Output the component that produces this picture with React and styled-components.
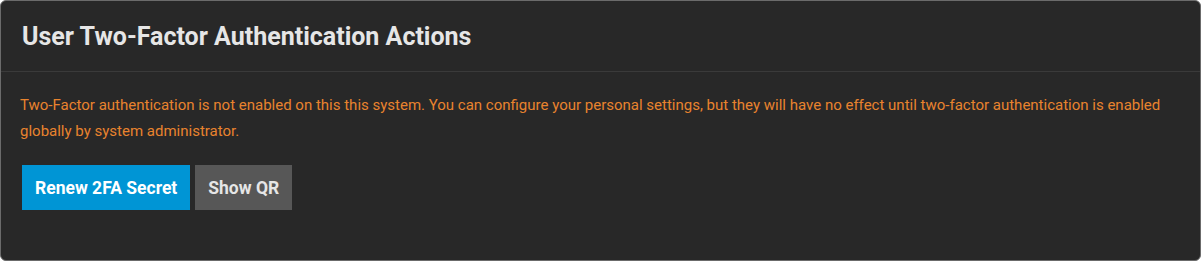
import React from "react";
import styled, { createGlobalStyle } from "styled-components";

const GlobalStyle = createGlobalStyle`
	html, body {
		margin: 0;
		padding: 0;
		background: #ffffff;
	}
	body {
		font-family: Roboto, "Liberation Sans", sans-serif;
	}
`;

const Card = styled.section`
	box-sizing: border-box;
	width: 1201px;
	height: 261px;
	background: #282828;
	border: 1px solid #6b6b6b;
	border-radius: 6px;
	display: flex;
	flex-direction: column;
	overflow: hidden;
`;

const CardHeader = styled.header`
	height: 70px;
	padding: 0 21px;
	display: flex;
	align-items: center;
	border-bottom: 1px solid #3a3a3a;

	h1 {
		margin: 0;
		font-size: 25px;
		font-weight: 700;
		color: #e6e6e6;
	}
`;

const CardBody = styled.div`
	padding: 20px 19px;
	display: flex;
	flex-direction: column;
	gap: 21px;
`;

const Warning = styled.p`
	margin: 0;
	font-size: 15px;
	line-height: 26px;
	color: #e8832e;
`;

const Actions = styled.div`
	display: flex;
	gap: 5px;
	padding-left: 2px;
`;

const Button = styled.button`
	height: 45px;
	padding: 0 13px;
	border: none;
	border-radius: 0;
	font-family: Roboto, "Liberation Sans", sans-serif;
	font-size: 17.5px;
	font-weight: 700;
	color: ${(p) => (p.$primary ? "#ffffff" : "#e6e6e6")};
	background: ${(p) => (p.$primary ? "#0095d5" : "#575757")};
	cursor: pointer;
`;

export default function App() {
	return (
		<>
			<GlobalStyle />
			<Card>
				<CardHeader>
					<h1>User Two-Factor Authentication Actions</h1>
				</CardHeader>
				<CardBody>
					<Warning>
						Two-Factor authentication is not enabled on this this system. You can configure your personal
						settings, but they will have no effect until two-factor authentication is enabled globally by
						system administrator.
					</Warning>
					<Actions>
						<Button $primary>Renew 2FA Secret</Button>
						<Button>Show QR</Button>
					</Actions>
				</CardBody>
			</Card>
		</>
	);
}
